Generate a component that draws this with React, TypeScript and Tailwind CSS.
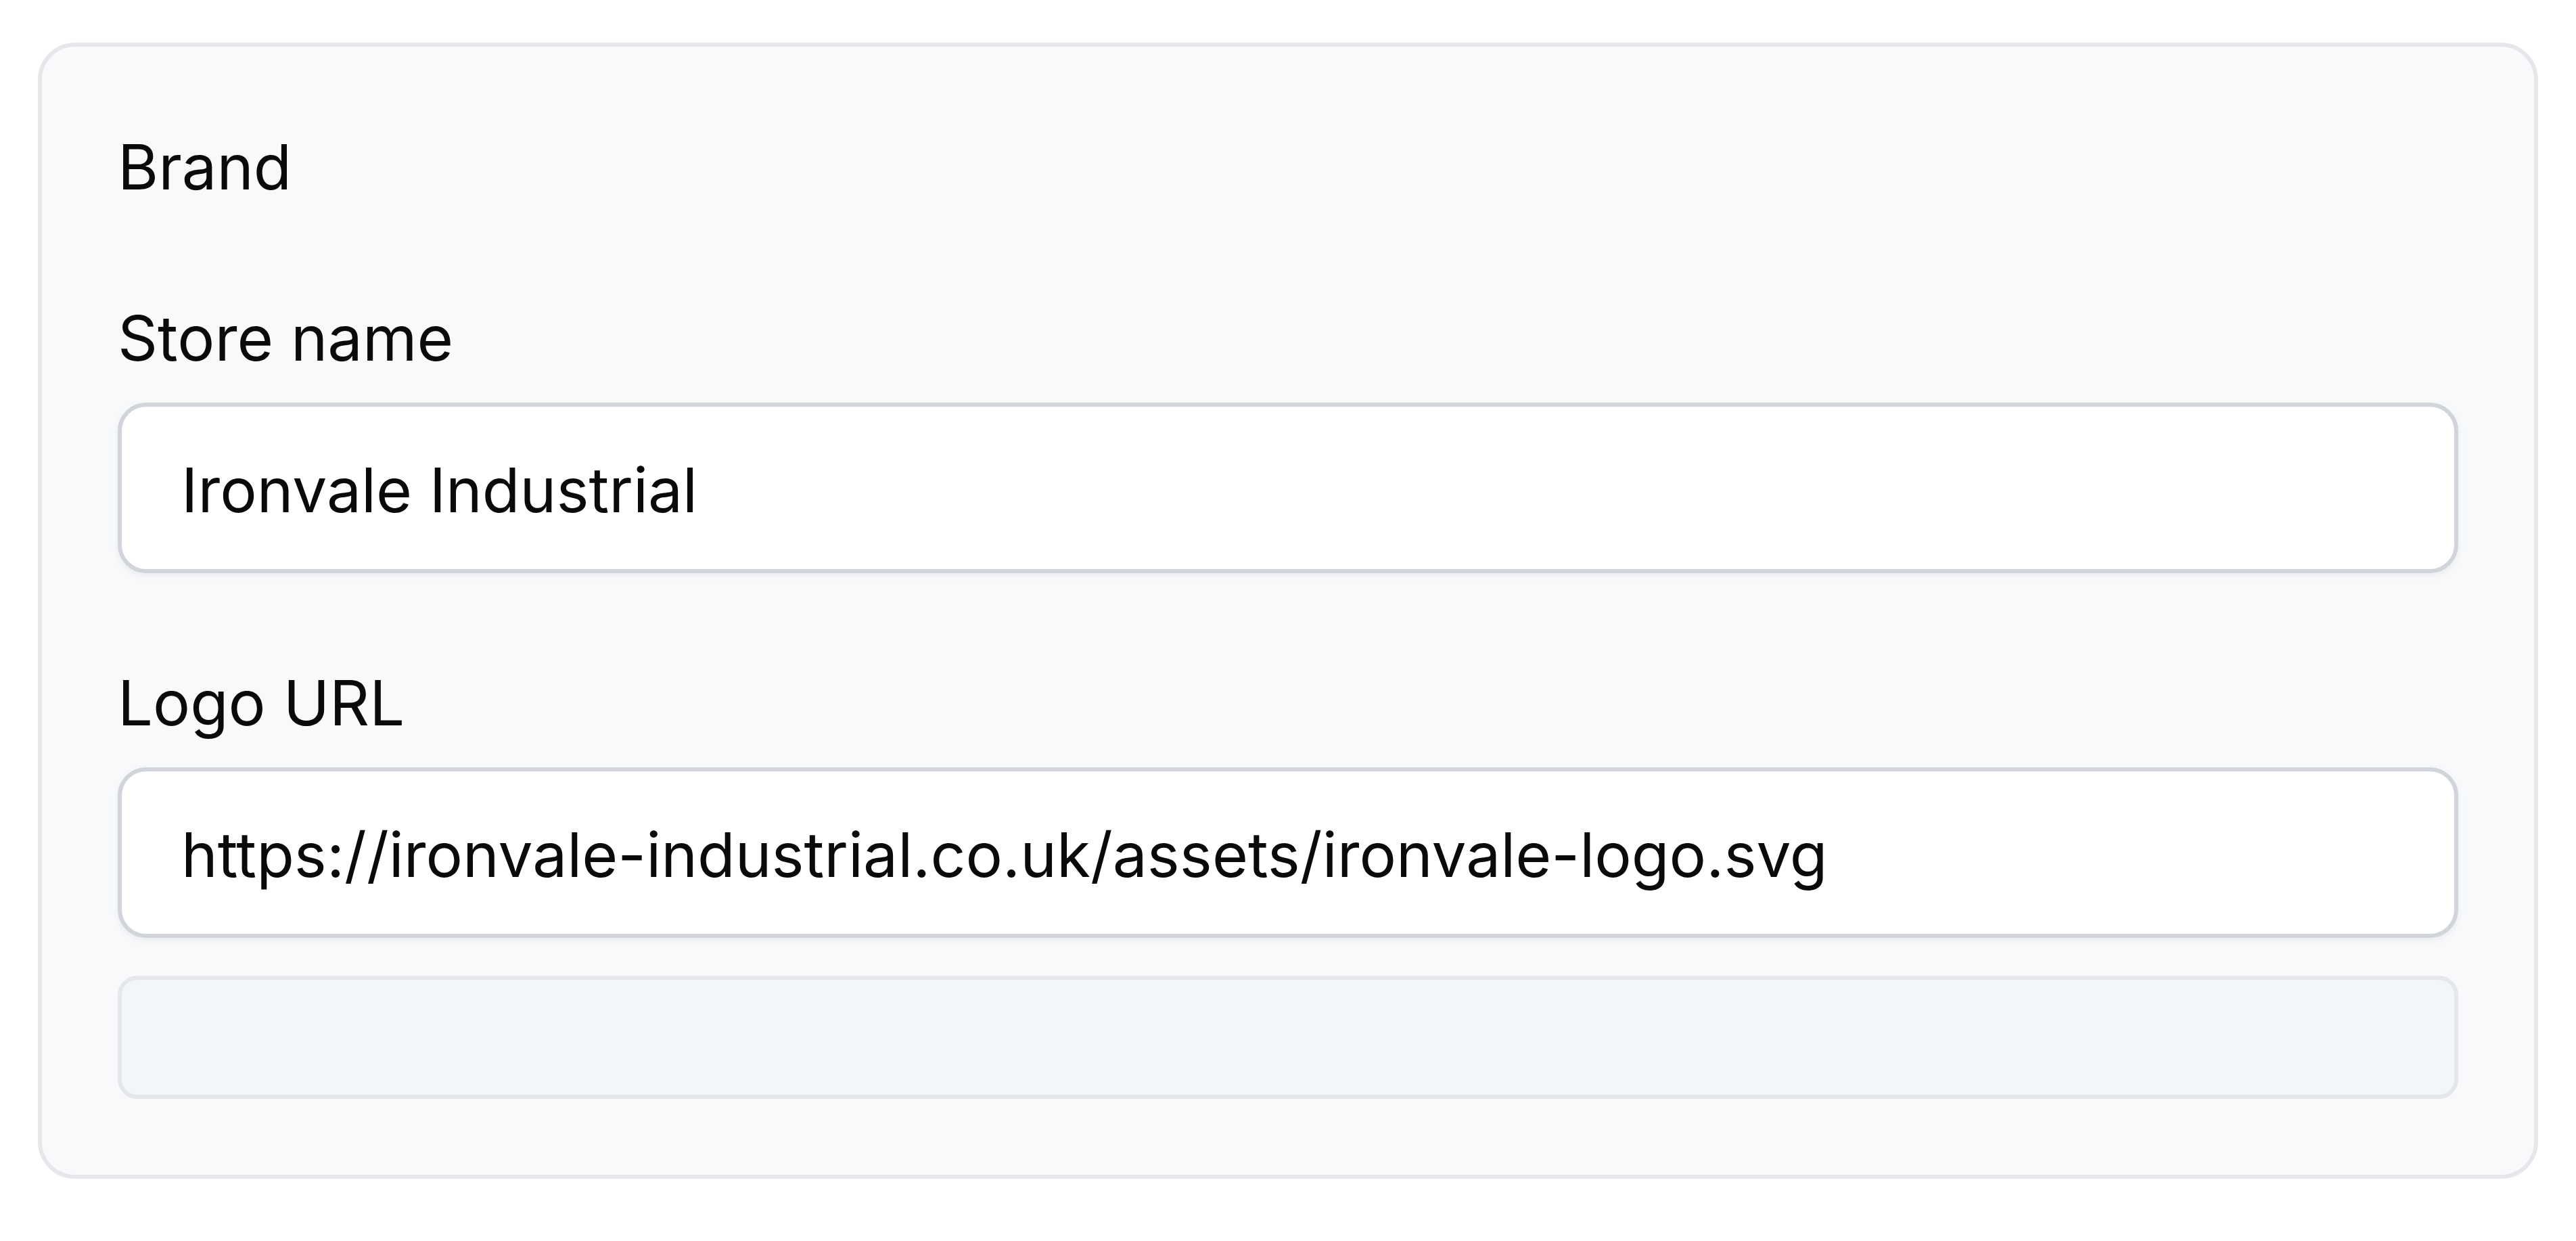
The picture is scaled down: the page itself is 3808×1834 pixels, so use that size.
const fieldInput =
  "block h-[252px] w-full rounded-[42px] border-[6px] border-[#d1d5db] bg-white pt-[5px] pl-[88px] pr-[84px] text-[91px] text-[#0a0a0a] shadow-[0_4px_10px_rgba(15,23,42,0.06)] outline-none"

const Field = ({
  label,
  value,
  className,
}: {
  label: string
  value: string
  className?: string
}) => (
  <label className={`flex flex-col ${className ?? ""}`}>
    <span className="text-[92px] leading-[131px] text-[#0a0a0a]">{label}</span>
    <input readOnly value={value} className={`mt-[30px] ${fieldInput}`} />
  </label>
)

export default function App() {
  return (
    <div className="min-h-screen bg-white px-[56px] pt-[63px] font-['Inter','Noto_Sans',sans-serif]">
      <section className="flex flex-col rounded-[55px] border-[6px] border-[#e5e7eb] bg-[#f8f9fb] p-[112px]">
        <h2 className="text-[92px] font-normal leading-[131px] text-[#0a0a0a]">
          Brand
        </h2>
        <Field className="mt-[122px]" label="Store name" value="Ironvale Industrial" />
        <Field
          className="mt-[126px]"
          label="Logo URL"
          value="https://ironvale-industrial.co.uk/assets/ironvale-logo.svg"
        />
        <div className="mt-[56px] h-[182px] rounded-[29px] border-[6px] border-[#e5e7eb] bg-[#f3f6f9]" />
      </section>
    </div>
  )
}
